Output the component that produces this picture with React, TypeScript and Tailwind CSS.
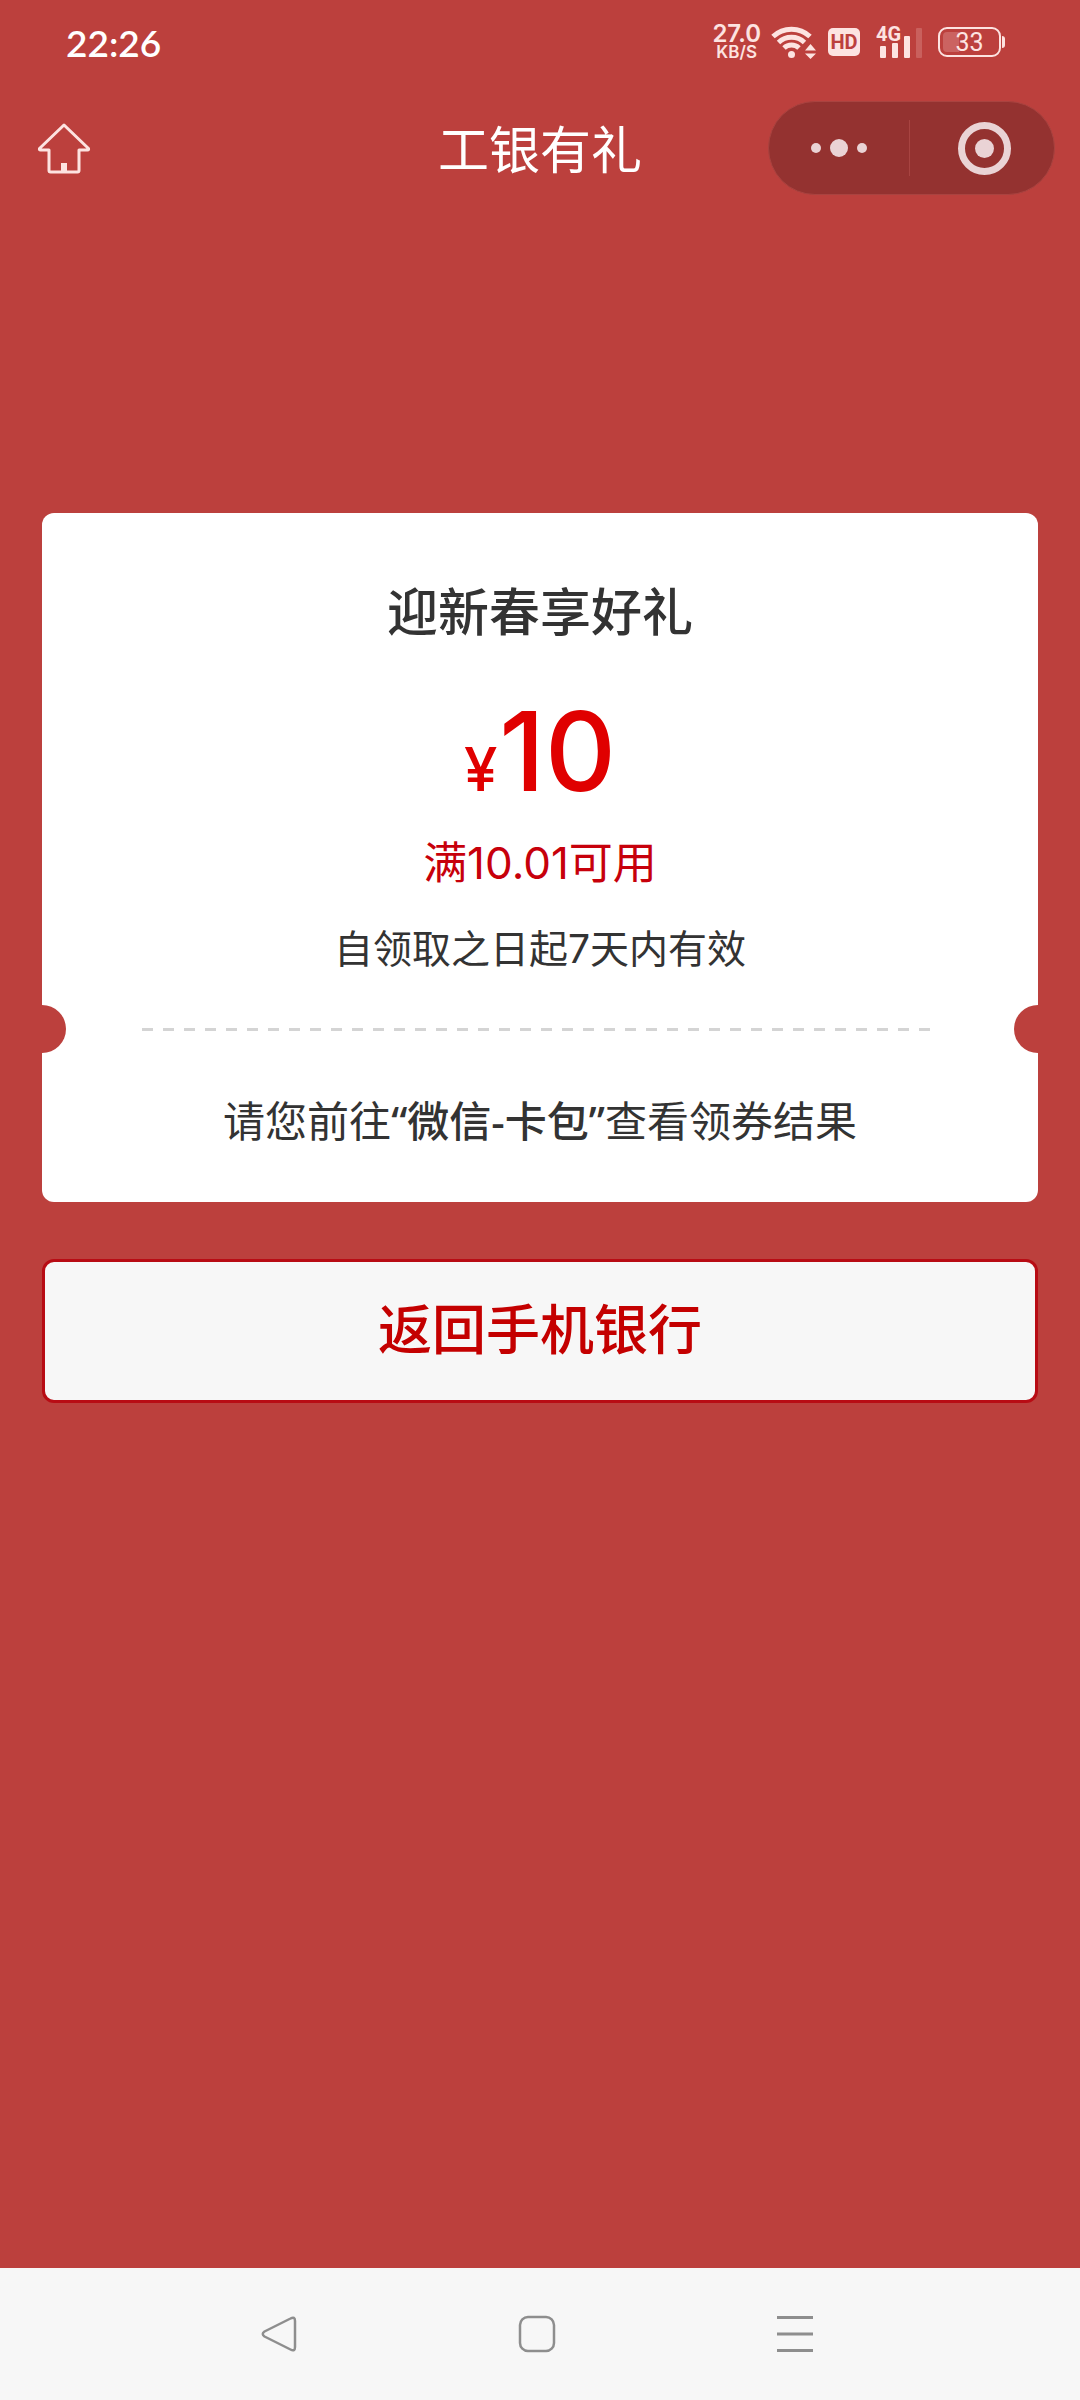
const PAGE_FONT = "font-['Inter','Noto_Sans_CJK_SC',sans-serif]";

function WifiIcon() {
  return (
    <svg width="45" height="34" viewBox="0 0 45 34" fill="none" aria-hidden="true">
      <g stroke="#fde3e1" strokeWidth="5">
        <path d="M2 11.5A27 27 0 0 1 39 11.5" />
        <path d="M7.500 17.500A19 19 0 0 1 33.500 17.500" />
        <path d="M13 23A11 11 0 0 1 28 23" />
      </g>
      <circle cx="20.500" cy="29.500" r="3.500" fill="#fde3e1" />
      <path d="M34 25.500L39.500 19L45 25.500ZM34 28.500H45L39.500 34Z" fill="#fde3e1" />
    </svg>
  );
}

function SignalIcon() {
  return (
    <svg width="48" height="46" viewBox="0 -6 48 46" aria-hidden="true">
      <g fill="#fde3e1">
        <rect x="4" y="21" width="6" height="12" rx="1" />
        <rect x="16" y="18" width="6" height="15" rx="1" />
        <rect x="28" y="11" width="6" height="22" rx="1" />
        <rect x="40" y="3" width="6" height="30" rx="1" opacity="0.2" />
      </g>
      <text x="0" y="16" fill="#fde3e1" fontSize="20" fontWeight="700" fontFamily="Roboto, sans-serif">
        4G
      </text>
    </svg>
  );
}

function StatusBar() {
  return (
    <header className="flex h-[84px] items-center justify-between pl-[66px] pr-[75px]">
      <time className="font-['Lato',sans-serif] text-[37px] font-semibold leading-none text-white">22:26</time>
      <div className="flex items-center text-[#fde3e1]">
        <div className="flex flex-col items-center font-['Inter',sans-serif] font-semibold">
          <span className="text-[24px] leading-[20px]">27.0</span>
          <span className="text-[17px] leading-[17px]">KB/S</span>
        </div>
        <div className="ml-[10px]">
          <WifiIcon />
        </div>
        <span className="ml-3 flex h-7 w-8 items-center justify-center rounded-[5px] bg-[#fde3e1] font-['Roboto',sans-serif] text-[20px] font-bold leading-none text-[#bc403d]">
          HD
        </span>
        <div className="ml-4">
          <SignalIcon />
        </div>
        <div className="ml-[14px] flex items-center gap-px">
          <div className="relative flex h-[30px] w-[63px] items-center justify-center rounded-[9px] border-2 border-[#fde3e1]">
            <span className="absolute inset-y-[3px] left-[3px] w-4 rounded-l-[4px] bg-[#cb6361]" />
            <span className="relative font-['Roboto',sans-serif] text-[25px] leading-none">33</span>
          </div>
          <span className="h-3 w-[3px] rounded-r-sm bg-[#fde3e1]" />
        </div>
      </div>
    </header>
  );
}

function TitleBar() {
  return (
    <nav className="grid h-[128px] grid-cols-[1fr_auto_1fr] items-center px-[25px]">
      <button type="button" aria-label="首页" className="ml-[11px] justify-self-start">
        <svg width="56" height="56" viewBox="0 0 56 56" fill="none" stroke="#fde3e1" strokeWidth="3" strokeLinejoin="round" aria-hidden="true">
          <path d="M28 5L52.500 28.500Q53 30 51.500 30H43V50.500Q43 52 41.500 52H14.500Q13 52 13 50.500V30H4.500Q3 30 3.500 28.500Z" />
          <path d="M28 43V52" strokeWidth="6" />
        </svg>
      </button>
      <h1 className="pt-1 text-[51px] leading-none text-white">工银有礼</h1>
      <div className="flex h-[94px] w-[287px] items-center justify-self-end rounded-full border border-[#a94340] bg-[#943230]">
        <button type="button" aria-label="更多" className="flex h-full flex-1 items-center justify-center gap-[9px]">
          <span className="size-[10px] rounded-full bg-[#ead3d5]" />
          <span className="size-[18px] rounded-full bg-[#ead3d5]" />
          <span className="size-[10px] rounded-full bg-[#ead3d5]" />
        </button>
        <span className="h-14 w-px bg-[#a84441]" />
        <button type="button" aria-label="关闭" className="flex h-full flex-1 items-center justify-center pl-1">
          <span className="flex size-[53px] items-center justify-center rounded-full border-[7px] border-[#ead3d5]">
            <span className="size-[19px] rounded-full bg-[#ead3d5]" />
          </span>
        </button>
      </div>
    </nav>
  );
}

function Coupon() {
  return (
    <section className="flex flex-col items-center overflow-hidden rounded-xl bg-white text-[#333333]">
      <h2 className="mt-[68px] text-[51px] font-medium leading-[64px]">迎新春享好礼</h2>
      <p className="mt-[50px] flex items-baseline gap-0.5 font-medium leading-[112px] text-[#e00000]">
        <span className="text-[60px]">¥</span>
        <span className="text-[110px]">10</span>
      </p>
      <p className="mt-1.5 text-[44px] leading-[64px] text-[#c7000b]">满10.01可用</p>
      <p className="mt-6 text-[39px] leading-[60px]">自领取之日起7天内有效</p>
      <div className="mt-[26px] flex w-full items-center justify-between">
        <span className="h-12 w-6 rounded-r-full bg-[#bc403d]" />
        <span className="mx-19 h-[3px] flex-1 bg-[repeating-linear-gradient(90deg,#d4d4d4_0_11px,transparent_11px_21px)]" />
        <span className="h-12 w-6 rounded-l-full bg-[#bc403d]" />
      </div>
      <p className="mb-12 mt-9 text-[42px] leading-[64px]">
        请您前往
        <strong className="font-['Noto_Sans','Noto_Sans_CJK_SC',sans-serif] font-medium">“微信-卡包”</strong>
        查看领券结果
      </p>
    </section>
  );
}

function SystemNav() {
  return (
    <footer className="flex h-[132px] items-center justify-center gap-[218px] bg-[#f7f7f7] pr-[6px]">
      <button type="button" aria-label="返回">
        <svg width="40" height="40" viewBox="0 0 40 40" fill="none" stroke="#8e8e8e" strokeWidth="2.5" strokeLinejoin="round" aria-hidden="true">
          <path d="M31.500 4.500Q36 2 36 7V33Q36 38 31.500 35.500L5.500 22.500Q2 20 5.500 17.500Z" />
        </svg>
      </button>
      <button type="button" aria-label="主屏幕">
        <svg width="40" height="40" viewBox="0 0 40 40" fill="none" stroke="#8e8e8e" strokeWidth="2.5" aria-hidden="true">
          <rect x="3" y="3" width="34" height="34" rx="8" />
        </svg>
      </button>
      <button type="button" aria-label="最近任务">
        <svg width="40" height="40" viewBox="0 0 40 40" fill="none" stroke="#8e8e8e" strokeWidth="3" aria-hidden="true">
          <path d="M2 3.500H38M2 20H38M2 36.500H38" />
        </svg>
      </button>
    </footer>
  );
}

export default function App() {
  return (
    <div className={`flex min-h-screen flex-col bg-[#bc403d] ${PAGE_FONT}`}>
      <StatusBar />
      <TitleBar />
      <main className="mt-[301px] flex flex-1 flex-col gap-[57px] px-[42px]">
        <Coupon />
        <button type="button" className="h-36 rounded-xl border-[3px] border-[#b80c14] bg-[#f7f7f7] text-[54px] font-medium leading-none text-[#c40000]">
          返回手机银行
        </button>
      </main>
      <SystemNav />
    </div>
  );
}
